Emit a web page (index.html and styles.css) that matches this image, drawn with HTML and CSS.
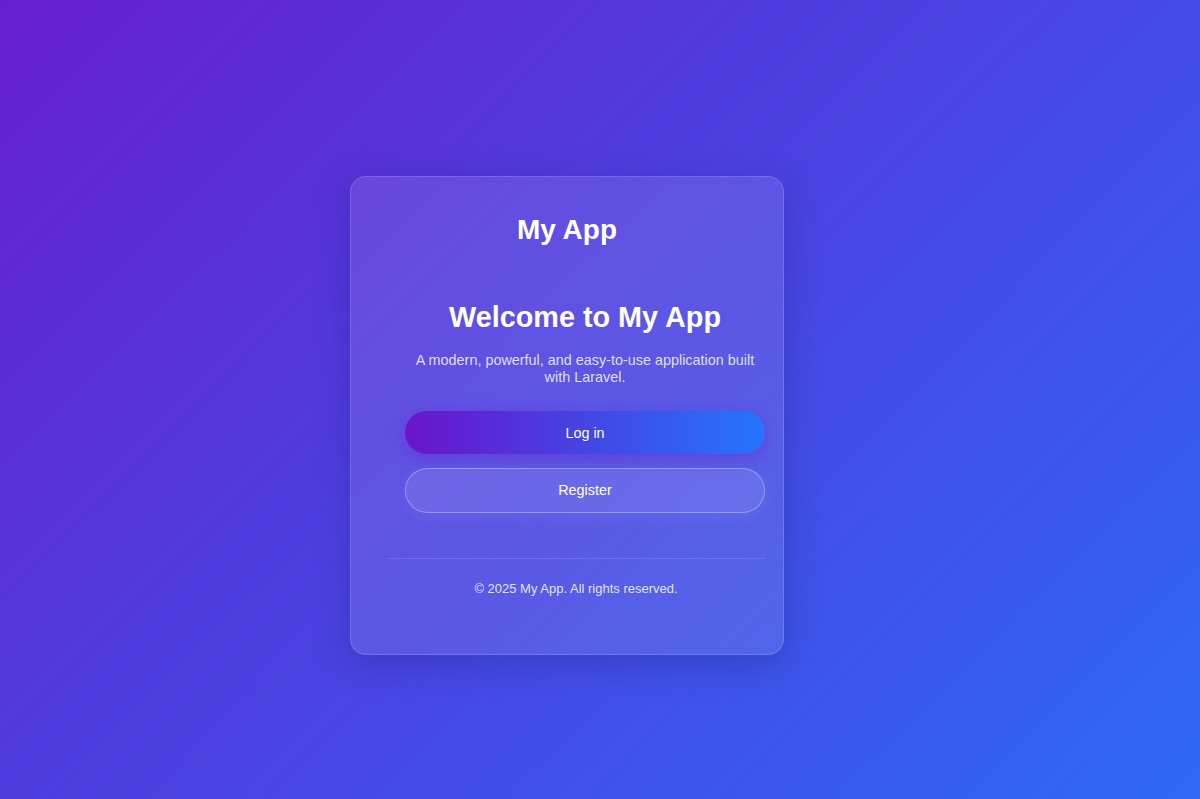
FILE: index.html
```html
<!DOCTYPE html>
<html lang="en">
<head>
<meta charset="utf-8">
<title>My App</title>
<link rel="stylesheet" href="styles.css">
</head>
<body>
<main class="page">
  <section class="card">
    <header class="brand">My App</header>
    <div class="body">
      <div class="hero">
        <h1 class="title">Welcome to My App</h1>
        <p class="subtitle">A modern, powerful, and easy-to-use application built with Laravel.</p>
        <div class="actions">
          <a class="btn btn-primary" href="#">Log in</a>
          <a class="btn btn-secondary" href="#">Register</a>
        </div>
      </div>
      <footer class="footer">© 2025 My App. All rights reserved.</footer>
    </div>
  </section>
</main>
</body>
</html>
```

FILE: styles.css
```css
* { box-sizing: border-box; }
html, body { margin: 0; padding: 0; }
body {
  font-family: "Liberation Sans", Arial, sans-serif;
  color: #fff;
  background: linear-gradient(135deg, #661fd0 0%, #2e69f3 100%);
  min-height: 100vh;
}
.page {
  min-height: 100vh;
  display: flex;
  justify-content: center;
  align-items: flex-start;
  padding: 176px 66px 0 0;
}
.card {
  width: 434px;
  height: 479px;
  background: rgba(255, 255, 255, 0.1);
  border: 1px solid rgba(255, 255, 255, 0.15);
  border-radius: 16px;
  box-shadow: 0 8px 32px 0 rgba(31, 38, 135, 0.37);
  padding: 37px 18px 0 36px;
  display: flex;
  flex-direction: column;
}
.brand {
  font-size: 28px;
  font-weight: 700;
  text-align: center;
  line-height: 32px;
  margin-left: -18px;
}
.body {
  display: flex;
  flex-direction: column;
}
.hero {
  padding-left: 18px;
  margin-top: 55px;
  display: flex;
  flex-direction: column;
  text-align: center;
}
.title {
  margin: 0;
  font-size: 28.8px;
  font-weight: 700;
  line-height: 33px;
}
.subtitle {
  margin: 18px 0 0;
  font-size: 14.4px;
  line-height: 16.5px;
  color: rgba(255, 255, 255, 0.82);
}
.actions {
  margin-top: 26px;
  display: flex;
  flex-direction: column;
  gap: 14px;
}
.btn {
  display: block;
  text-decoration: none;
  color: #fff;
  font-size: 14.4px;
  line-height: 18px;
  border-radius: 999px;
  text-align: center;
}
.btn-primary {
  padding: 13px 0 12px;
  background: linear-gradient(90deg, #6a14cb 0%, #4445e2 50%, #2575fc 100%);
  box-shadow: 0 4px 15px rgba(106, 17, 203, 0.35);
}
.btn-secondary {
  padding: 12px 0;
  height: 45px;
  background: rgba(255, 255, 255, 0.1);
  border: 1px solid rgba(255, 255, 255, 0.3);
  box-shadow: 0 4px 15px rgba(255, 255, 255, 0.08);
}
.footer {
  margin-top: 45px;
  border-top: 1px solid rgba(255, 255, 255, 0.12);
  padding-top: 22px;
  text-align: center;
  font-size: 13px;
  line-height: 15px;
  color: rgba(255, 255, 255, 0.85);
}
```
